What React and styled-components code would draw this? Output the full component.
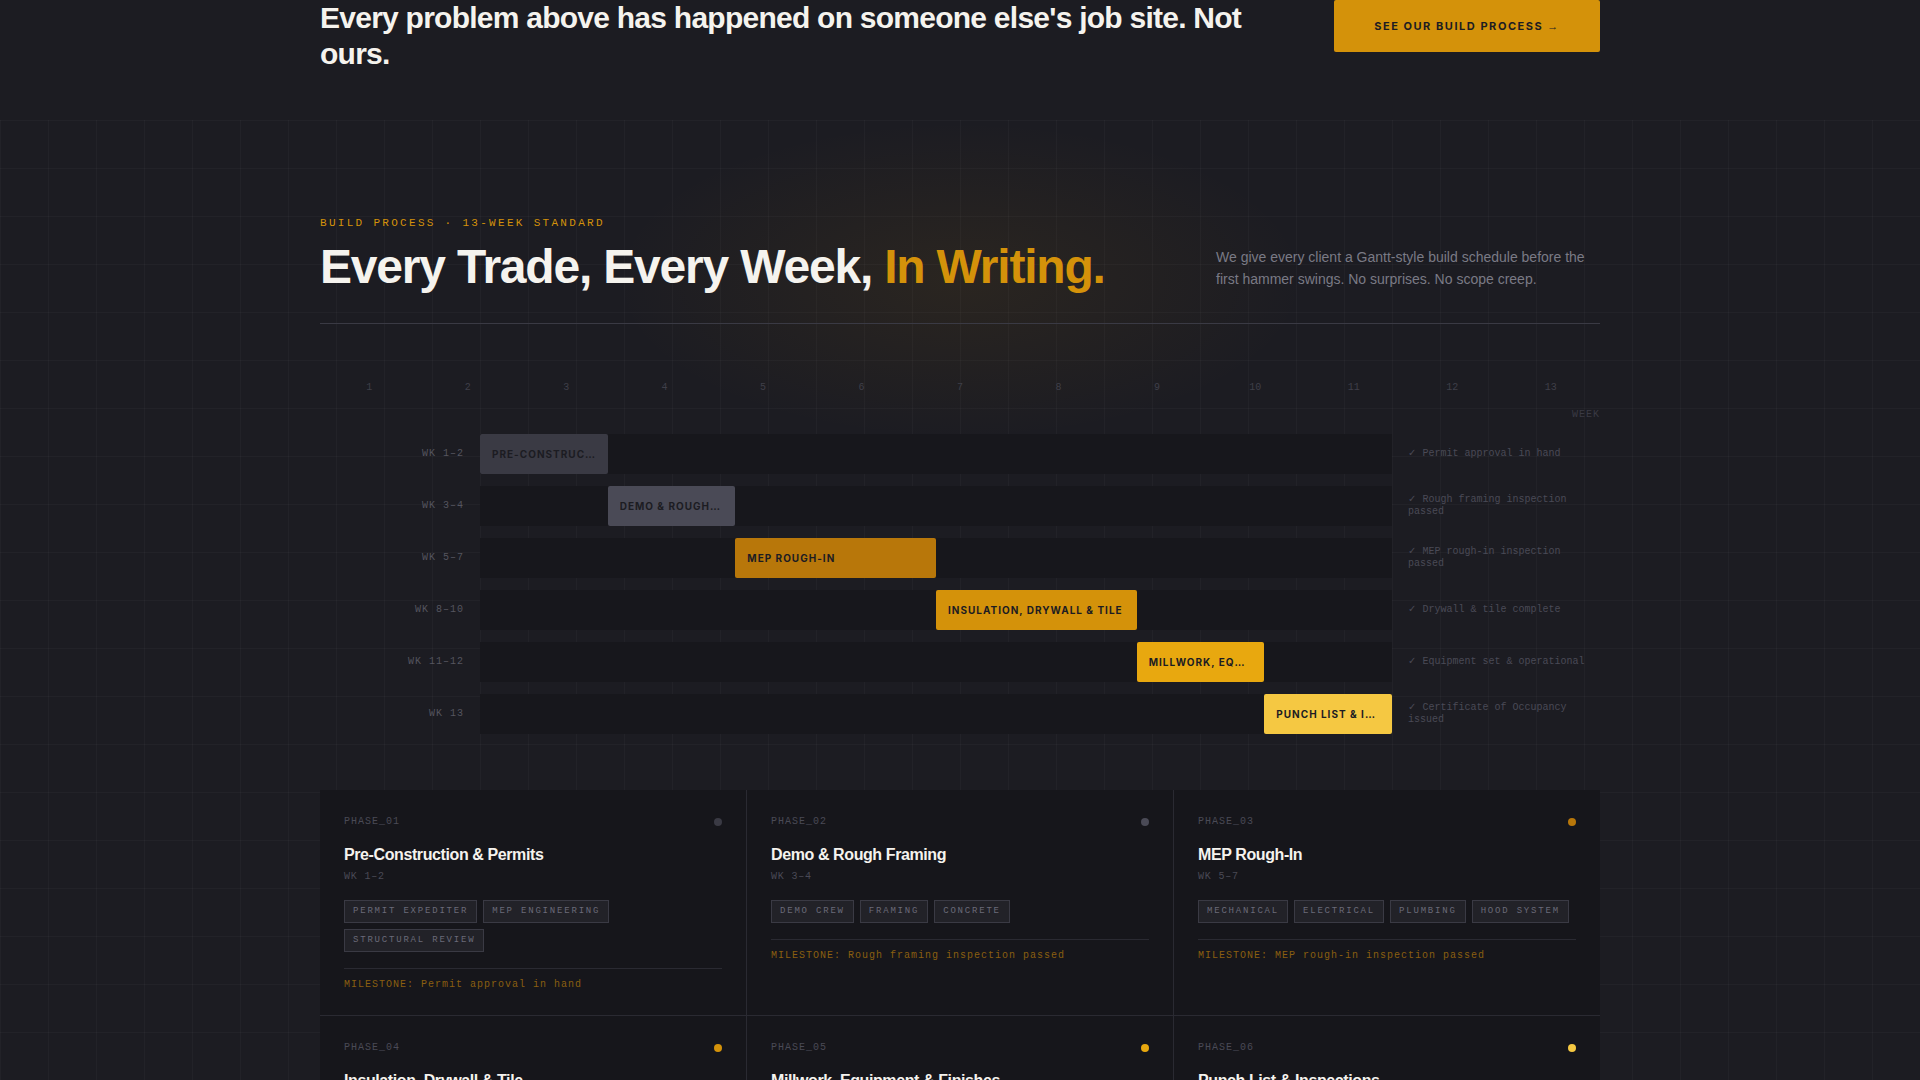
import React from "react";
import styled, { createGlobalStyle } from "styled-components";

const MONO = '"Liberation Mono", monospace';
const SANS = '"Liberation Sans", Arial, sans-serif';
const UI = 'Inter, "Liberation Sans", sans-serif';

const weeks = [1, 2, 3, 4, 5, 6, 7, 8, 9, 10, 11, 12, 13];

const rows = [
  { wk: "WK 1–2", name: "PRE-CONSTRUCTION", left: 0, width: 14, bar: "#3a3a44", note: "✓ Permit approval in hand" },
  { wk: "WK 3–4", name: "DEMO & ROUGH FRAMING", left: 14, width: 14, bar: "#4a4a56", note: "✓ Rough framing inspection passed" },
  { wk: "WK 5–7", name: "MEP ROUGH-IN", left: 28, width: 22, bar: "#b8770a", note: "✓ MEP rough-in inspection passed" },
  { wk: "WK 8–10", name: "INSULATION, DRYWALL & TILE", left: 50, width: 22, bar: "#d4920a", note: "✓ Drywall & tile complete" },
  { wk: "WK 11–12", name: "MILLWORK, EQUIPMENT", left: 72, width: 14, bar: "#e8a80f", note: "✓ Equipment set & operational" },
  { wk: "WK 13", name: "PUNCH LIST & INSPECTIONS", left: 86, width: 14, bar: "#f5c842", note: "✓ Certificate of Occupancy issued" },
];

const phases = [
  { id: "PHASE_01", title: "Pre-Construction & Permits", wk: "WK 1–2", dot: "#3a3a44", tags: ["PERMIT EXPEDITER", "MEP ENGINEERING", "STRUCTURAL REVIEW"], milestone: "Permit approval in hand" },
  { id: "PHASE_02", title: "Demo & Rough Framing", wk: "WK 3–4", dot: "#4a4a56", tags: ["DEMO CREW", "FRAMING", "CONCRETE"], milestone: "Rough framing inspection passed" },
  { id: "PHASE_03", title: "MEP Rough-In", wk: "WK 5–7", dot: "#b8770a", tags: ["MECHANICAL", "ELECTRICAL", "PLUMBING", "HOOD SYSTEM"], milestone: "MEP rough-in inspection passed" },
  { id: "PHASE_04", title: "Insulation, Drywall & Tile", wk: "WK 8–10", dot: "#d4920a", tags: ["INSULATION", "DRYWALL", "TILE"], milestone: "Drywall & tile complete" },
  { id: "PHASE_05", title: "Millwork, Equipment & Finishes", wk: "WK 11–12", dot: "#e8a80f", tags: ["MILLWORK", "EQUIPMENT"], milestone: "Equipment set & operational" },
  { id: "PHASE_06", title: "Punch List & Inspections", wk: "WK 13", dot: "#f5c842", tags: ["PUNCH LIST", "INSPECTIONS"], milestone: "Certificate of Occupancy issued" },
];

export default function App() {
  return (
    <Page>
      <GlobalStyle />
      <CtaBand>
        <CtaInner>
          <CtaTitle>Every problem above has happened on someone else's job site. Not ours.</CtaTitle>
          <CtaButton>
            SEE OUR BUILD PROCESS <CtaArrow>→</CtaArrow>
          </CtaButton>
        </CtaInner>
      </CtaBand>

      <ProcessSection>
        <Glow />
        <Container>
          <Header>
            <div>
              <Eyebrow>BUILD PROCESS · 13-WEEK STANDARD</Eyebrow>
              <Headline>
                Every Trade, Every Week, <Accent>In Writing.</Accent>
              </Headline>
            </div>
            <Lede>
              We give every client a Gantt-style build schedule before the first hammer swings. No
              surprises. No scope creep.
            </Lede>
          </Header>

          <WeekScale>
            {weeks.map((w) => (
              <WeekNum key={w}>{w}</WeekNum>
            ))}
          </WeekScale>
          <WeekLabel>WEEK</WeekLabel>

          <Gantt>
            {rows.map((r) => (
              <GanttRow key={r.wk}>
                <RowLabel>{r.wk}</RowLabel>
                <Track>
                  <Bar $bar={r.bar} style={{ marginLeft: `${r.left}%`, width: `${r.width}%` }}>
                    <BarText>{r.name}</BarText>
                  </Bar>
                </Track>
                <RowNote>{r.note}</RowNote>
              </GanttRow>
            ))}
          </Gantt>

          <PhaseGrid>
            {phases.map((p) => (
              <PhaseCard key={p.id}>
                <CardTop>
                  <PhaseId>{p.id}</PhaseId>
                  <Dot $color={p.dot} />
                </CardTop>
                <PhaseTitle>{p.title}</PhaseTitle>
                <PhaseWeeks>{p.wk}</PhaseWeeks>
                <Tags>
                  {p.tags.map((t) => (
                    <Tag key={t}>{t}</Tag>
                  ))}
                </Tags>
                <Milestone>MILESTONE: {p.milestone}</Milestone>
              </PhaseCard>
            ))}
          </PhaseGrid>
        </Container>
      </ProcessSection>
    </Page>
  );
}

const GlobalStyle = createGlobalStyle`
  html, body {
    margin: 0;
    height: 1080px;
    overflow: hidden;
    background: #1c1c22;
  }
`;

const Page = styled.div`
  width: 1920px;
  height: 1080px;
  overflow: hidden;
  background: #1c1c22;
`;

const CtaBand = styled.div`
  height: 120px;
`;

const CtaInner = styled.div`
  width: 1280px;
  margin: 0 auto;
  display: flex;
  justify-content: space-between;
  align-items: flex-start;
  gap: 48px;
`;

const CtaTitle = styled.h2`
  margin: 0;
  max-width: 966px;
  font: 700 30px/36px ${SANS};
  letter-spacing: -0.75px;
  color: #f5f3ee;
`;

const CtaButton = styled.a`
  flex: none;
  display: flex;
  align-items: center;
  justify-content: center;
  gap: 4px;
  width: 266px;
  height: 52px;
  border-radius: 2px;
  background: #d4920a;
  color: #1c1c22;
  font: 700 11px ${UI};
  letter-spacing: 1.54px;
`;

const CtaArrow = styled.span`
  font-family: ${SANS};
  font-weight: 400;
`;

const ProcessSection = styled.section`
  position: relative;
  padding-top: 96px;
  background-color: #1c1c22;
  background-image:
    linear-gradient(rgba(255, 255, 255, 0.027) 1px, transparent 1px),
    linear-gradient(90deg, rgba(255, 255, 255, 0.027) 1px, transparent 1px);
  background-size: 48px 48px;
`;

const Glow = styled.div`
  position: absolute;
  left: 610px;
  top: 0;
  width: 700px;
  height: 320px;
  background: radial-gradient(ellipse at center, rgba(212, 146, 10, 0.08), transparent 70%);
  pointer-events: none;
`;

const Container = styled.div`
  position: relative;
  width: 1280px;
  margin: 0 auto;
`;

const Header = styled.header`
  display: flex;
  justify-content: space-between;
  align-items: flex-end;
  padding-bottom: 30px;
  border-bottom: 1px solid #3a3a44;
`;

const Eyebrow = styled.div`
  font: 400 11px/15px ${MONO};
  letter-spacing: 2.3px;
  color: #d4920a;
  margin-bottom: 9px;
`;

const Headline = styled.h2`
  margin: 0;
  font: 700 48px/53px ${SANS};
  letter-spacing: -1.2px;
  color: #f5f3ee;
`;

const Accent = styled.span`
  color: #d4920a;
`;

const Lede = styled.p`
  margin: 0 0 3px;
  width: 384px;
  font: 400 14px/22px ${SANS};
  color: #7a7a85;
`;

const WeekScale = styled.div`
  display: grid;
  grid-template-columns: repeat(13, 1fr);
  margin-top: 58px;
`;

const WeekNum = styled.span`
  text-align: center;
  font: 400 10px/12px ${MONO};
  color: #3f3f49;
`;

const WeekLabel = styled.div`
  margin-top: 15px;
  text-align: right;
  font: 400 10px/12px ${MONO};
  letter-spacing: 1px;
  color: #3a3a44;
`;

const Gantt = styled.div`
  display: flex;
  flex-direction: column;
  gap: 12px;
  margin-top: 13px;
`;

const GanttRow = styled.div`
  display: grid;
  grid-template-columns: 160px 912px 208px;
  height: 40px;
  align-items: center;
`;

const RowLabel = styled.div`
  padding-right: 16px;
  padding-bottom: 1px;
  text-align: right;
  font: 400 10px/12px ${MONO};
  letter-spacing: 1px;
  color: #55555f;
`;

const Track = styled.div`
  height: 40px;
  display: flex;
  background: #17171c;
`;

const Bar = styled.div`
  display: flex;
  align-items: center;
  padding: 0 12px;
  box-sizing: border-box;
  border-radius: 2px;
  background: ${(p) => p.$bar};
  color: #1c1c22;
`;

const BarText = styled.span`
  overflow: hidden;
  white-space: nowrap;
  text-overflow: ellipsis;
  font: 700 10px/12px ${UI};
  letter-spacing: 1px;
`;

const RowNote = styled.div`
  padding-left: 16px;
  font: 400 10px/12px "Liberation Mono", "DejaVu Sans", monospace;
  color: #4a4a56;
`;

const PhaseGrid = styled.div`
  display: grid;
  grid-template-columns: repeat(3, 1fr);
  gap: 1px;
  margin-top: 56px;
  background: #2a2a32;
`;

const PhaseCard = styled.article`
  padding: 25px 24px 23px;
  background: #16161b;
`;

const CardTop = styled.div`
  display: flex;
  justify-content: space-between;
  align-items: center;
  margin-bottom: 16px;
`;

const PhaseId = styled.span`
  font: 400 10px/14px ${MONO};
  letter-spacing: 1px;
  color: #4a4a56;
`;

const Dot = styled.span`
  width: 8px;
  height: 8px;
  border-radius: 50%;
  background: ${(p) => p.$color};
`;

const PhaseTitle = styled.h3`
  margin: 0 0 5px;
  font: 700 16px/20px ${SANS};
  letter-spacing: -0.4px;
  color: #f5f3ee;
`;

const PhaseWeeks = styled.div`
  margin-bottom: 16px;
  font: 400 10px/14px ${MONO};
  letter-spacing: 0.8px;
  color: #4a4a56;
`;

const Tags = styled.div`
  display: flex;
  flex-wrap: wrap;
  gap: 6px;
`;

const Tag = styled.span`
  padding: 4px 8px 5px;
  border: 1px solid #3a3a44;
  background: #222228;
  font: 400 9px/12px ${MONO};
  letter-spacing: 1.8px;
  color: #6a6a78;
`;

const Milestone = styled.div`
  margin-top: 16px;
  padding-top: 9px;
  border-top: 1px solid #2a2a32;
  font: 400 10px/14px ${MONO};
  letter-spacing: 1px;
  color: #8a5f10;
`;
